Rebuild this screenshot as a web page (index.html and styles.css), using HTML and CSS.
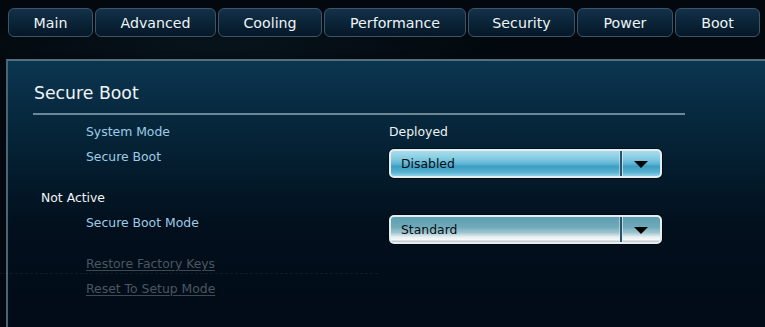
FILE: index.html
```html
<!DOCTYPE html>
<html>
<head>
<meta charset="utf-8">
<link rel="stylesheet" href="styles.css">
</head>
<body>
<div class="screen">
  <nav class="tabs">
    <div class="tab">Main</div>
    <div class="tab">Advanced</div>
    <div class="tab">Cooling</div>
    <div class="tab">Performance</div>
    <div class="tab">Security</div>
    <div class="tab">Power</div>
    <div class="tab">Boot</div>
  </nav>
  <section class="panel">
    <h1 class="title">Secure Boot</h1>
    <div class="divider"></div>
    <div class="row row-short">
      <div class="label">System Mode</div>
      <div class="value">Deployed</div>
    </div>
    <div class="row row-tall">
      <div class="label">Secure Boot</div>
      <div class="select select-active">
        <div class="select-value">Disabled</div>
        <div class="select-btn"><span class="arrow"></span></div>
      </div>
    </div>
    <div class="row row-short">
      <div class="status">Not Active</div>
    </div>
    <div class="row row-tall">
      <div class="label">Secure Boot Mode</div>
      <div class="select select-normal">
        <div class="select-value">Standard</div>
        <div class="select-btn"><span class="arrow"></span></div>
      </div>
    </div>
    <div class="row row-short">
      <div class="label link">Restore Factory Keys</div>
    </div>
    <div class="row row-short">
      <div class="label link">Reset To Setup Mode</div>
    </div>
  </section>
  <div class="scanline"></div>
</div>
</body>
</html>
```
FILE: styles.css
```css
* { box-sizing: border-box; }
html, body {
  margin: 0;
  padding: 0;
  height: 100%;
}
body {
  background: #02080d;
  font-family: "DejaVu Sans", "Liberation Sans", sans-serif;
  overflow: hidden;
}
.screen {
  position: relative;
  width: 765px;
  height: 327px;
  background:
    radial-gradient(ellipse 300px 30px at 220px 45px, rgba(30, 70, 90, 0.18), transparent),
    #02080d;
}
.tabs {
  display: flex;
  gap: 2px;
  padding: 8px 0 0 8px;
}
.tab {
  height: 29px;
  padding: 0 20px;
  display: flex;
  align-items: center;
  justify-content: center;
  font-size: 14.2px;
  color: #eef3f6;
  border: 1px solid #3a566b;
  border-radius: 6px;
  background: linear-gradient(#133149, #0a2336 55%, #061727);
}
.tab:nth-child(1) { width: 85px; }
.tab:nth-child(2) { width: 121px; }
.tab:nth-child(3) { width: 104px; }
.tab:nth-child(4) { width: 142px; }
.tab:nth-child(5) { width: 107px; }
.tab:nth-child(6) { width: 96px; }
.tab:nth-child(7) { width: 85px; }

.panel {
  margin: 22px 0 0 6px;
  height: 268px;
  border-top: 2px solid #566f7f;
  border-left: 2px solid #4a6576;
  padding: 22px 0 0 0;
  background: linear-gradient(#0b3650 0%, #072a40 18%, #041d2e 40%, #020f1c 62%, #010b17 100%);
}
.title {
  margin: 0 0 10px 26px;
  font-weight: normal;
  font-size: 17.3px;
  line-height: 20px;
  color: #f0f4f6;
}
.divider {
  margin-left: 25px;
  width: 652px;
  height: 2px;
  background: #6c8898;
  margin-bottom: 10px;
}
.row {
  display: flex;
  align-items: flex-start;
  font-size: 12.4px;
  line-height: 14px;
}
.row-short { height: 25px; }
.row-tall { height: 41px; }
.label {
  width: 303px;
  margin-left: 78px;
  color: #9fcbe8;
}
.value {
  color: #eef2f4;
}
.status {
  margin-left: 33px;
  color: #f2f4f6;
}
.link {
  color: #4b5661;
  text-decoration: underline;
  text-underline-offset: 2px;
  text-decoration-color: #3e4953;
}
.select {
  display: flex;
  width: 273px;
  height: 29px;
  margin-top: -1px;
  border: 2px solid #e2eef2;
  border-radius: 5px;
  box-shadow: 0 0 0 1px rgba(0, 0, 0, 0.5);
  overflow: hidden;
}
.select-active {
  background: linear-gradient(#a9dcec 0%, #86cbe2 30%, #5cb4d4 52%, #3d9dc2 62%, #58b2d2 85%, #90d0e6 100%);
}
.select-normal {
  background: linear-gradient(#5e9eb0 0%, #6eaaba 40%, #9ec4cf 62%, #e8f0f2 80%, #f6f7f7 90%, #b8c2c6 100%);
}
.select-value {
  flex: 1;
  padding-left: 10px;
  display: flex;
  align-items: center;
  font-size: 12.4px;
  color: #0b0e10;
}
.select-btn {
  width: 40px;
  display: flex;
  align-items: center;
  justify-content: center;
  border-left: 2px solid #2b5464;
  box-shadow: inset 1px 0 0 rgba(220, 240, 246, 0.7), -1px 0 0 rgba(220, 240, 246, 0.5);
}
.arrow {
  width: 0;
  height: 0;
  border-left: 7px solid transparent;
  border-right: 7px solid transparent;
  border-top: 7px solid #050505;
  margin-top: 1px;
}
.scanline {
  position: absolute;
  left: 0;
  top: 273px;
  width: 378px;
  border-top: 1px dashed rgba(120, 140, 150, 0.12);
}
```
